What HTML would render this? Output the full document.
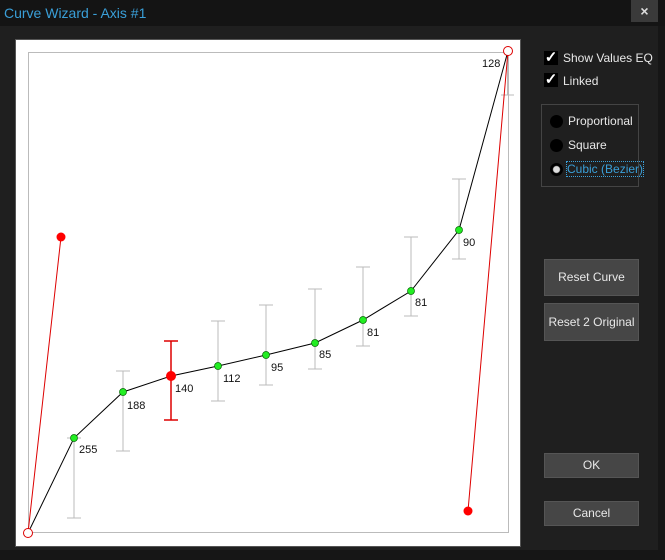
<!DOCTYPE html><html><head><style>
body{margin:0;width:665px;height:560px;background:#1f1f1f;font-family:"Liberation Sans",sans-serif;overflow:hidden;position:relative}
.tb{position:absolute;left:0;top:0;width:665px;height:26px;background:#141414}
.tt{position:absolute;left:4px;top:5px;color:#3a9fd8;font-size:14px}
.x{position:absolute;left:631px;top:0;width:27px;height:22px;background:#3a3a3a;color:#ddd;font-weight:bold;font-size:14px;text-align:center;line-height:22px}
.bot{position:absolute;left:0;top:550px;width:665px;height:10px;background:#161616}
.rb{position:absolute;left:658px;top:26px;width:7px;height:534px;background:#161616}
.btn{position:absolute;left:544px;width:95px;background:#464646;border:1px solid #555;color:#e8e8e8;font-size:12px;text-align:center;box-sizing:border-box}
.lab{position:absolute;color:#e8e8e8;font-size:12px}
.cb{position:absolute;left:544px;width:14px;height:14px;background:#000;color:#fff;font-size:15px;line-height:14px;text-align:center;font-weight:bold}
.rd{position:absolute;left:550px;width:13px;height:13px;border-radius:50%;background:#000}
</style></head><body>
<div class="tb"><div class="tt">Curve Wizard - Axis #1</div><div class="x">×</div></div>
<div class="rb"></div><div class="bot"></div>
<svg style="position:absolute;left:0;top:0" width="665" height="560">
<rect x="15.5" y="39.5" width="505" height="507" fill="#fff" stroke="#555"/>
<rect x="28.5" y="52.5" width="480" height="480" fill="none" stroke="#bbb"/>
<g stroke="#bbb" stroke-width="1">
<path d="M74 438V518M67 518H81M123 371V451M116 371H130M116 451H130M218 321V401M211 321H225M211 401H225M266 305V385M259 305H273M259 385H273M315 289V369M308 289H322M308 369H322M363 267V346M356 267H370M356 346H370M411 237V316M404 237H418M404 316H418M459 179V259M452 179H466M452 259H466M507.5 52V95M501 95H514M67 438H81"/>
</g>
<path d="M171 341V420M164 341H178M164 420H178" stroke="#d00" stroke-width="1.5"/>
<path d="M28 533L61 237M508 51L468 511" stroke="#d00" stroke-width="1"/>
<polyline points="28,533 74,438 123,392 171,376 218,366 266,355 315,343 363,320 411,291 459,230 508,51" fill="none" stroke="#000" stroke-width="1"/>
<g fill="#2e2" stroke="#060" stroke-width="0.7">
<circle cx="74" cy="438" r="3.5"/><circle cx="123" cy="392" r="3.5"/><circle cx="218" cy="366" r="3.5"/><circle cx="266" cy="355" r="3.5"/><circle cx="315" cy="343" r="3.5"/><circle cx="363" cy="320" r="3.5"/><circle cx="411" cy="291" r="3.5"/><circle cx="459" cy="230" r="3.5"/></g>
<circle cx="171" cy="376" r="5" fill="#f00"/><circle cx="61" cy="237" r="4.5" fill="#f00"/><circle cx="468" cy="511" r="4.5" fill="#f00"/>
<circle cx="28" cy="533" r="4.5" fill="#fff" stroke="#d00"/><circle cx="508" cy="51" r="4.5" fill="#fff" stroke="#d00"/>
<g font-family="Liberation Sans,sans-serif" font-size="11" fill="#111">
<text x="79" y="453">255</text><text x="127" y="409">188</text><text x="175" y="392">140</text><text x="223" y="382">112</text><text x="271" y="371">95</text><text x="319" y="358">85</text><text x="367" y="336">81</text><text x="415" y="306">81</text><text x="463" y="246">90</text><text x="482" y="67">128</text></g>
<rect x="541.5" y="104.5" width="97" height="82" fill="none" stroke="#444"/>
</svg>
<div class="cb" style="top:51px">✓</div><div class="lab" style="left:563px;top:51px">Show Values EQ</div>
<div class="cb" style="top:73px">✓</div><div class="lab" style="left:563px;top:74px">Linked</div>
<div class="rd" style="top:115px"></div><div class="lab" style="left:568px;top:114px">Proportional</div>
<div class="rd" style="top:139px"></div><div class="lab" style="left:568px;top:138px">Square</div>
<div class="rd" style="top:163px;background:radial-gradient(circle,#ddd 0 3px,#000 4px)"></div><div class="lab" style="left:567px;top:162px;color:#3a9fd8;outline:1px dotted #3a9fd8">Cubic (Bezier)</div>
<div class="btn" style="top:259px;height:37px;line-height:35px">Reset Curve</div>
<div class="btn" style="top:303px;height:38px;line-height:36px">Reset 2 Original</div>
<div class="btn" style="top:453px;height:25px;line-height:23px">OK</div>
<div class="btn" style="top:501px;height:25px;line-height:23px">Cancel</div>
</body></html>
